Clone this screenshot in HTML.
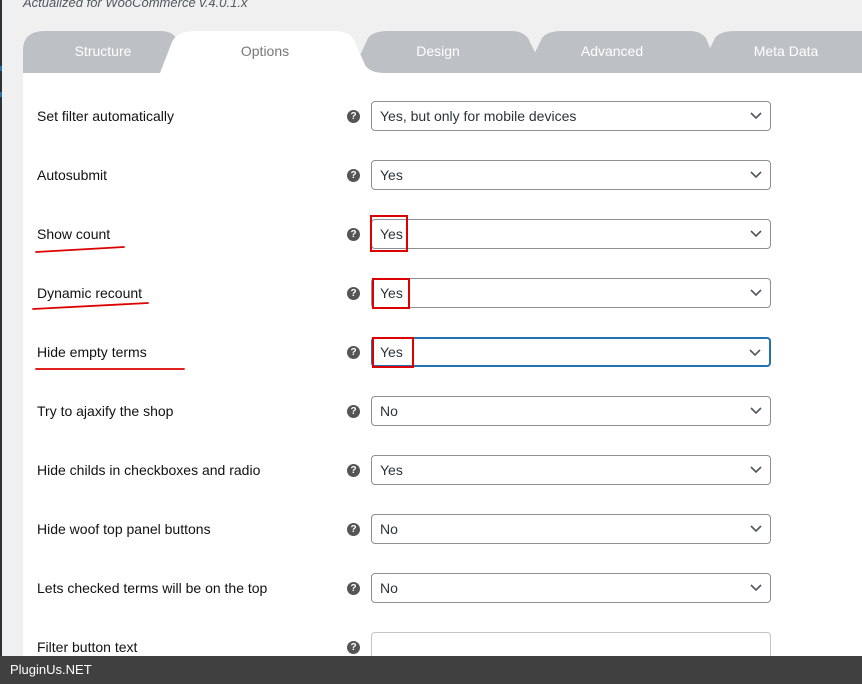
<!DOCTYPE html>
<html><head><meta charset="utf-8"><style>
*{margin:0;padding:0;box-sizing:border-box}
html,body{width:862px;height:684px;overflow:hidden;background:#f0f0f1;font-family:"Liberation Sans",sans-serif;position:relative}
.edge{position:absolute;left:0;top:0;width:2px;height:684px;background:#2c3338}
.top{position:absolute;left:23px;top:-5px;font-style:italic;color:#50575e;font-size:13px}
.panel{position:absolute;left:23px;top:73px;width:839px;height:600px;background:#fff}
.tablbl{position:absolute;top:43px;font-size:14px;color:#fff;text-align:center}
.row{position:absolute;left:37px;width:740px;height:30px}
.lbl{position:absolute;left:0;top:7px;font-size:14px;color:#111}
.help{position:absolute;left:310px;top:9px;width:13px;height:13px;border-radius:50%;background:#555;color:#fff;font-size:10px;font-weight:bold;text-align:center;line-height:13px}
.sel{position:absolute;left:334px;top:0;width:400px;height:30px;border:1px solid #8c8f94;border-radius:4px;font-size:14px;color:#2c3338;padding:6px 8px}
.sel svg{position:absolute;right:8px;top:10px}
.foot{position:absolute;left:0;top:656px;width:862px;height:28px;background:#404040;color:#fff;font-size:13px;padding:6px 10px}
</style></head><body>
<div class="edge"></div>
<div style="position:absolute;left:0;top:66px;width:2px;height:5px;background:#2271b1"></div>
<div style="position:absolute;left:0;top:92px;width:2px;height:5px;background:#2271b1"></div>
<div class="top">Actualized for WooCommerce v.4.0.1.x</div>
<svg style="position:absolute;left:0;top:0" width="862" height="80">
<path d="M698 73 L715 38 Q720 31 735 31 L862 31 L862 73 Z" fill="#bdc1c6"/>
<path d="M525 73 L542 38 Q547 31 562 31 L690 31 Q700 31 706 38 L720 73 Z" fill="#bdc1c6"/>
<path d="M352 73 L368 38 Q373 31 388 31 L512 31 Q522 31 528 38 L545 73 Z" fill="#bdc1c6"/>
<path d="M23 73 L23 50 Q23 31 45 31 L160 31 Q172 31 176 38 L190 73 Z" fill="#bdc1c6"/>
<path d="M160 73 L172 42 Q177 31 195 31 L335 31 Q350 31 355 42 L365 65 Q370 73 385 73 Z" fill="#fff"/>
</svg>
<div class="tablbl" style="left:23px;width:160px">Structure</div>
<div class="tablbl" style="left:175px;width:180px;color:#777">Options</div>
<div class="tablbl" style="left:352px;width:172px">Design</div>
<div class="tablbl" style="left:525px;width:174px">Advanced</div>
<div class="tablbl" style="left:700px;width:172px">Meta Data</div>
<div class="panel"></div>

<div class="row" style="top:101px"><div class="lbl">Set filter automatically</div><div class="help">?</div><div class="sel">Yes, but only for mobile devices<svg width="12" height="8"><path d="M1 1 L6 6 L11 1" stroke="#50575e" stroke-width="1.6" fill="none"/></svg></div></div>
<div class="row" style="top:160px"><div class="lbl">Autosubmit</div><div class="help">?</div><div class="sel">Yes<svg width="12" height="8"><path d="M1 1 L6 6 L11 1" stroke="#50575e" stroke-width="1.6" fill="none"/></svg></div></div>
<div class="row" style="top:219px"><div class="lbl">Show count</div><div class="help">?</div><div class="sel">Yes<svg width="12" height="8"><path d="M1 1 L6 6 L11 1" stroke="#50575e" stroke-width="1.6" fill="none"/></svg></div></div>
<div class="row" style="top:278px"><div class="lbl">Dynamic recount</div><div class="help">?</div><div class="sel">Yes<svg width="12" height="8"><path d="M1 1 L6 6 L11 1" stroke="#50575e" stroke-width="1.6" fill="none"/></svg></div></div>
<div class="row" style="top:337px"><div class="lbl">Hide empty terms</div><div class="help">?</div><div class="sel" style="border:2px solid #2271b1;padding:5px 7px">Yes<svg width="12" height="8"><path d="M1 1 L6 6 L11 1" stroke="#50575e" stroke-width="1.6" fill="none"/></svg></div></div>
<div class="row" style="top:396px"><div class="lbl">Try to ajaxify the shop</div><div class="help">?</div><div class="sel">No<svg width="12" height="8"><path d="M1 1 L6 6 L11 1" stroke="#50575e" stroke-width="1.6" fill="none"/></svg></div></div>
<div class="row" style="top:455px"><div class="lbl">Hide childs in checkboxes and radio</div><div class="help">?</div><div class="sel">Yes<svg width="12" height="8"><path d="M1 1 L6 6 L11 1" stroke="#50575e" stroke-width="1.6" fill="none"/></svg></div></div>
<div class="row" style="top:514px"><div class="lbl">Hide woof top panel buttons</div><div class="help">?</div><div class="sel">No<svg width="12" height="8"><path d="M1 1 L6 6 L11 1" stroke="#50575e" stroke-width="1.6" fill="none"/></svg></div></div>
<div class="row" style="top:573px"><div class="lbl">Lets checked terms will be on the top</div><div class="help">?</div><div class="sel">No<svg width="12" height="8"><path d="M1 1 L6 6 L11 1" stroke="#50575e" stroke-width="1.6" fill="none"/></svg></div></div>
<div class="row" style="top:632px"><div class="lbl">Filter button text</div><div class="help">?</div><div class="sel" style="border-color:#c3c4c7"></div></div>

<svg style="position:absolute;left:0;top:0" width="862" height="684">
<g fill="none" stroke="#d00" stroke-width="2">
<rect x="371" y="216" width="36" height="35"/>
<rect x="373" y="279" width="36" height="29"/>
<rect x="373" y="338" width="40" height="29"/>
</g>
<g stroke="#d00" stroke-width="1.8" stroke-linecap="round">
<path d="M36 252 L124 247"/>
<path d="M33 309 L148 303"/>
<path d="M36 369 L184 369"/>
</g>
</svg>
<div class="foot">PluginUs.NET</div>
</body></html>
